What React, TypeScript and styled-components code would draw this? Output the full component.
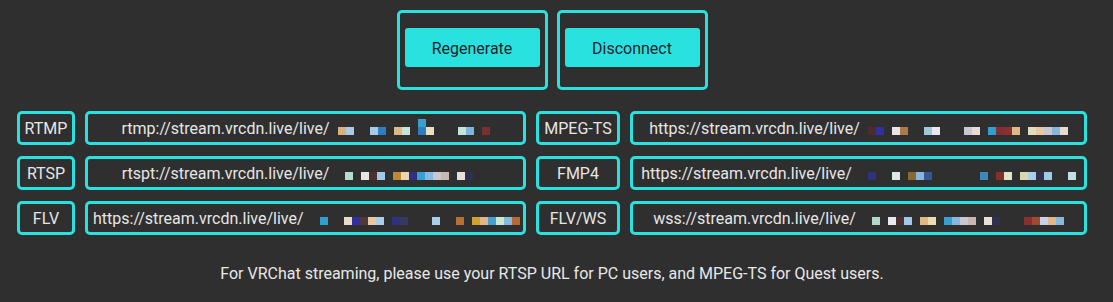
import React from "react";
import styled, { createGlobalStyle } from "styled-components";

const CYAN = "#29e2df";

const GlobalStyle = createGlobalStyle`
  body {
    margin: 0;
    background-color: #2f2f2f;
    font-family: Roboto, "Liberation Sans", sans-serif;
  }
`;

const Page = styled.div`
  width: 1070px;
  padding: 10px 0 20px 17px;
`;

const ButtonBar = styled.div`
  display: flex;
  justify-content: center;
  gap: 9px;
`;

const ButtonFrame = styled.div`
  border: 3px solid ${CYAN};
  border-radius: 5px;
  padding: 15px 5px 20px;
`;

const ActionButton = styled.button`
  width: 135px;
  height: 39px;
  padding: 2px 0 0;
  border: none;
  border-radius: 3px;
  background-color: ${CYAN};
  color: #1d1f2b;
  font-family: inherit;
  font-size: 16px;
  cursor: pointer;
`;

const Grid = styled.div`
  margin-top: 21px;
  display: grid;
  grid-template-columns: 58px 441px 84px 457px;
  grid-auto-rows: 34px;
  column-gap: 10px;
  row-gap: 11px;
`;

const Label = styled.div`
  border: 3px solid ${CYAN};
  border-radius: 5px;
  display: flex;
  align-items: center;
  justify-content: center;
  color: #e6e6e6;
  font-size: 16px;
`;

const UrlField = styled.div<{ $align?: string }>`
  border: 3px solid ${CYAN};
  border-radius: 5px;
  display: flex;
  align-items: center;
  justify-content: ${(props) => (props.$align ? props.$align : "center")};
  gap: 8px;
  padding: 0 5px;
  overflow: hidden;
  white-space: nowrap;
  color: #e6e6e6;
  font-size: 16px;
`;

const UrlText = styled.span`
  flex-shrink: 0;
`;

const Strip = styled.div`
  display: flex;
  align-items: flex-end;
  height: 8px;
  margin-top: 6px;
  flex-shrink: 0;
`;

const Cell = styled.div<{ $color: string; $top?: string }>`
  width: 8px;
  height: ${(props) => (props.$top ? "16px" : "8px")};
  flex-shrink: 0;
  background: ${(props) =>
    props.$top
      ? `linear-gradient(${props.$top} 50%, ${props.$color} 50%)`
      : props.$color};
`;

const Footer = styled.p`
  margin: 29px 0 0;
  text-align: center;
  color: #e8e8e8;
  font-size: 16px;
`;

// pixelated stream keys: "" is a gap, "top/bottom" is a two-block column
type Row = {
  label: string;
  url: string;
  key: string[];
  align?: string;
};

const rows: Row[] = [
  {
    label: "RTMP",
    url: "rtmp://stream.vrcdn.live/live/",
    key: ["#d8b07a", "#a8cce8", "", "", "#a8cce8", "#2e7fbf", "", "#dcb888", "#c4e4d8", "", "#38a0d0/#2e7fbf", "#e8e0c0", "", "", "", "#c4e4d8", "#80b4e0", "", "#7a3030"],
  },
  {
    label: "MPEG-TS",
    url: "https://stream.vrcdn.live/live/",
    key: ["#4a2c2c", "#3030a0", "", "#e8e4e8", "#b07848", "", "", "#a0c8d8", "#e8e8f0", "", "", "", "#c8c8d0", "#e8dcd8", "", "#30a0d0", "#803030", "#8a3030", "#e0b888", "", "#e0dcc0", "#e8c8a0", "#c8c8d0", "#88b8e0", "#e8dcd0"],
  },
  {
    label: "RTSP",
    url: "rtspt://stream.vrcdn.live/live/",
    key: ["", "#b8dcd0", "", "#e8e4e4", "#4a3030", "#a0c8e8", "", "#c08838", "#e8d8b0", "#303080", "#38a0d0", "#88b8e0", "#c8c8d0", "#c8b8b0", "", "#e8e0d8", "#303050", "", ""],
  },
  {
    label: "FMP4",
    url: "https://stream.vrcdn.live/live/",
    key: ["", "#303080", "", "", "#dce8e8", "", "#8a6830", "#88b8e0", "#3a5890", "", "", "", "", "", "", "#3a88c0", "", "#883030", "#e0e8c8", "", "#d8d8b0", "#a8d0e8", "#303050", "#a0c8e8", "", "", "#c0e0e0"],
  },
  {
    label: "FLV",
    url: "https://stream.vrcdn.live/live/",
    align: "flex-start",
    key: ["", "#30a0d0", "", "", "#e8dcc8", "#3030a0", "#503838", "#e8c8a0", "#a8d0e8", "", "#303080", "#383860", "", "", "", "#a8d0e8", "", "", "#b87030", "", "#d0a030", "#e0b888", "#48a0d0", "#c8e8d0", "#88b8e0", "#b86830"],
  },
  {
    label: "FLV/WS",
    url: "wss://stream.vrcdn.live/live/",
    key: ["", "#b0d8c8", "", "#e8e8f0", "#4a3030", "#a0c8e8", "", "#e0b888", "#e8dcb0", "", "#38a0d0", "#88b8e0", "#c8c8d0", "#c8b8b0", "", "#e8e0d8", "#303050", "", "", "", "#883030", "#a04830", "#c8d0e8", "#e0b888", "#88b8e0"],
  },
];

const App = () => {
  return (
    <Page>
      <GlobalStyle />
      <ButtonBar>
        <ButtonFrame>
          <ActionButton>Regenerate</ActionButton>
        </ButtonFrame>
        <ButtonFrame>
          <ActionButton>Disconnect</ActionButton>
        </ButtonFrame>
      </ButtonBar>

      <Grid>
        {rows.map((row) => (
          <React.Fragment key={row.label}>
            <Label>{row.label}</Label>
            <UrlField $align={row.align}>
              <UrlText>{row.url}</UrlText>
              <Strip>
                {row.key.map((c, i) => {
                  const [top, bottom] = c.includes("/") ? c.split("/") : [undefined, c];
                  return <Cell key={i} $color={bottom || "transparent"} $top={top} />;
                })}
              </Strip>
            </UrlField>
          </React.Fragment>
        ))}
      </Grid>

      <Footer>
        For VRChat streaming, please use your RTSP URL for PC users, and MPEG-TS for Quest users.
      </Footer>
    </Page>
  );
};

export default App;
